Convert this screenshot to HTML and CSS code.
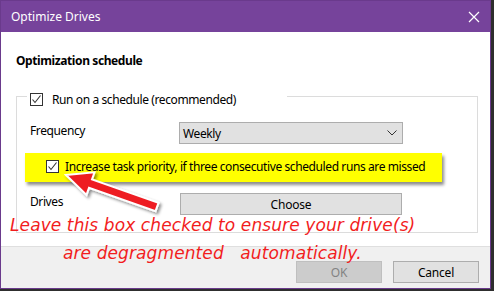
FILE: index.html
```html
<!DOCTYPE html>
<html lang="en">
<head>
    <meta charset="UTF-8">
    <title>Optimize Drives</title>
    <link rel="stylesheet" href="styles.css">
</head>
<body>
    <div class="window">
        <div class="titlebar">
            <span class="title">Optimize Drives</span>
            <svg class="close" width="12" height="12" viewBox="0 0 12 12">
                <path d="M1 1 L11 11 M11 1 L1 11" stroke="#fff" stroke-width="1.2" fill="none"/>
            </svg>
        </div>
        <div class="content">
            <div class="heading">Optimization schedule</div>
            <div class="group">
                <div class="group-head">
                    <div class="line line-left"></div>
                    <label class="check legend">
                        <span class="box"><svg width="11" height="11" viewBox="0 0 11 11"><path d="M1.5 5.5 L4 8.5 L9.5 1.5" stroke="#333" stroke-width="1.1" fill="none"/></svg></span>
                        Run on a schedule (recommended)
                    </label>
                    <div class="line line-right"></div>
                </div>
                <div class="row row-freq">
                    <span class="row-label">Frequency</span>
                    <div class="select">
                        <span>Weekly</span>
                        <svg width="10" height="6" viewBox="0 0 10 6"><path d="M0.5 0.5 L5 5 L9.5 0.5" stroke="#333" stroke-width="1" fill="none"/></svg>
                    </div>
                </div>
                <div class="highlight">
                    <label class="check">
                        <span class="box"><svg width="11" height="11" viewBox="0 0 11 11"><path d="M1.5 5.5 L4 8.5 L9.5 1.5" stroke="#333" stroke-width="1.1" fill="none"/></svg></span>
                        Increase task priority, if three consecutive scheduled runs are missed
                    </label>
                </div>
                <div class="row row-drives">
                    <span class="row-label">Drives</span>
                    <button class="btn btn-choose">Choose</button>
                </div>
            </div>
        </div>
        <div class="footer">
            <button class="btn btn-dialog" disabled>OK</button>
            <button class="btn btn-dialog">Cancel</button>
        </div>

        <!-- annotation on top of the screenshot -->
        <svg class="arrow" width="494" height="291" viewBox="0 0 494 291">
            <defs>
                <filter id="shadow" x="-20%" y="-20%" width="140%" height="140%">
                    <feDropShadow dx="2" dy="2" stdDeviation="1.5" flood-color="#000" flood-opacity="0.45"/>
                </filter>
            </defs>
            <polygon points="66,175 94.5,172.3 92,179.4 158.5,202.8 155.5,211.2 89,187.8 86.5,194.9"
                     fill="#ee1c24" stroke="#fff" stroke-width="2" stroke-linejoin="miter" filter="url(#shadow)"/>
        </svg>
        <div class="note">
            <div class="note-line1">Leave this box checked to ensure your drive(s)</div>
            <div class="note-line2">are degragmented &nbsp; automatically.</div>
        </div>
    </div>
</body>
</html>
```

FILE: styles.css
```css
body {
    margin: 0;
    width: 494px;
    height: 291px;
    background-color: #2e2e2e;
    font-family: 'Noto Sans', 'Open Sans', sans-serif;
    font-size: 12px;
    color: #000;
}
.window {
    position: relative;
    width: 489px;
    height: 287px;
    border: 1px solid #6a3a8c;
    background-color: #fff;
    display: flex;
    flex-direction: column;
}
.titlebar {
    height: 31px;
    background-color: #76439b;
    display: flex;
    align-items: center;
    justify-content: space-between;
    padding: 0 10px 0 10px;
    color: #fff;
    flex-shrink: 0;
}
.title {
    font-size: 12px;
    margin-top: -1px;
}
.content {
    height: 214px;
    padding: 21px 0 0 15px;
    box-sizing: border-box;
    flex-shrink: 0;
    letter-spacing: -0.4px;
}
.heading {
    font-weight: bold;
    line-height: 16px;
    height: 16px;
    margin-bottom: 27px;
}
.group {
    width: 462px;
    height: 137px;
    box-sizing: border-box;
    border: 1px solid #dcdcdc;
    border-top: none;
}
.group-head {
    display: flex;
    align-items: flex-start;
    height: 26px;
}
.line {
    border-top: 1px solid #dcdcdc;
}
.line-left {
    width: 10px;
}
.line-right {
    flex: 1;
}
.check {
    display: flex;
    align-items: center;
    line-height: 15px;
    white-space: nowrap;
}
.legend {
    width: 257px;
    padding-left: 3px;
    margin-top: -4px;
}
.box {
    width: 13px;
    height: 13px;
    box-sizing: border-box;
    border: 1px solid #333;
    background-color: #fff;
    display: flex;
    align-items: center;
    justify-content: center;
    margin-right: 9px;
    flex-shrink: 0;
}
.row {
    display: flex;
    align-items: flex-start;
    padding-left: 13px;
}
.row-label {
    width: 149px;
    line-height: 15px;
    padding-top: 1px;
}
.select {
    width: 224px;
    height: 22px;
    box-sizing: border-box;
    border: 1px solid #adadad;
    background-color: #e1e1e1;
    display: flex;
    align-items: center;
    justify-content: space-between;
    padding: 0 5px 0 3px;
}
.highlight {
    margin: 9px 0 0 8px;
    width: 417px;
    height: 29px;
    box-sizing: border-box;
    background-color: #ffff00;
    box-shadow: 2px 3px 3px rgba(0, 0, 0, 0.45);
    padding: 6px 0 0 21px;
}
.highlight .box {
    margin-right: 6px;
}
.row-drives {
    margin-top: 11px;
}
.btn {
    font-family: 'Noto Sans', 'Open Sans', sans-serif;
    font-size: 12px;
    letter-spacing: -0.2px;
    height: 22px;
    box-sizing: border-box;
    border: 1px solid #adadad;
    background-color: #e1e1e1;
    color: #000;
    padding: 0;
}
.btn-choose {
    width: 222px;
    margin-left: 1px;
}
.footer {
    flex: 1;
    background-color: #f0f0f0;
    border-top: 1px solid #dfdfdf;
    display: flex;
    justify-content: flex-end;
    align-items: flex-start;
    gap: 11px;
    padding: 14px 11px 0 0;
}
.btn-dialog {
    width: 86px;
}
.btn-dialog:disabled {
    background-color: #cccccc;
    border-color: #bfbfbf;
    color: #838383;
}
.arrow {
    position: absolute;
    left: -1px;
    top: -1px;
    pointer-events: none;
}
.note {
    position: absolute;
    left: 9px;
    top: 210px;
    color: #f21d1d;
    font-family: 'DejaVu Sans', sans-serif;
    font-style: italic;
    font-size: 17px;
    line-height: 28px;
    letter-spacing: 0.1px;
    pointer-events: none;
}
.note-line2 {
    padding-left: 53px;
}
```
